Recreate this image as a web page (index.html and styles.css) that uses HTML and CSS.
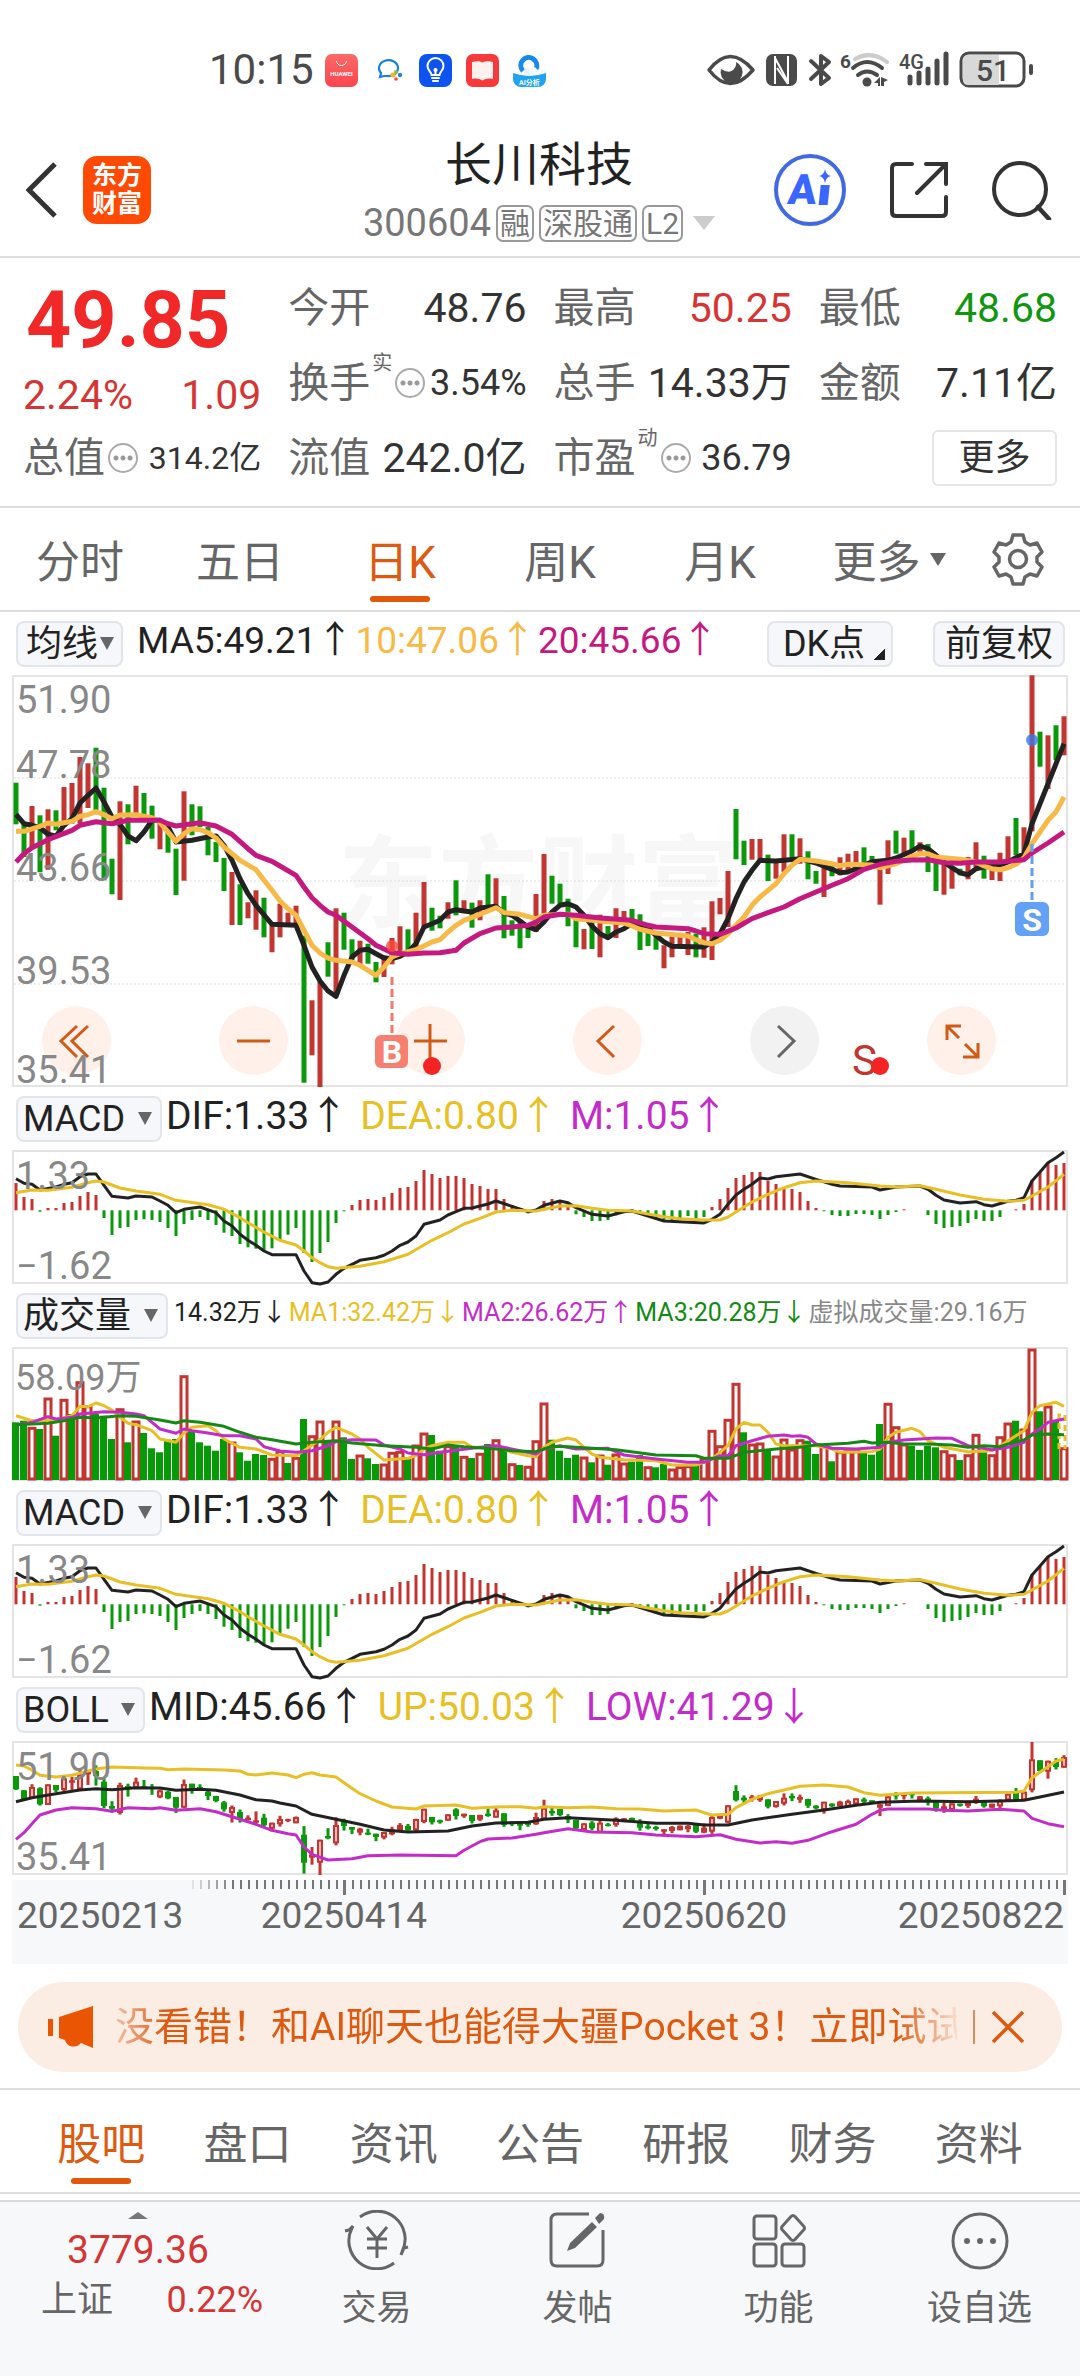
FILE: index.html
```html
<!DOCTYPE html>
<html lang="zh-CN">
<head>
<meta charset="utf-8">
<meta name="viewport" content="width=device-width, initial-scale=1">
<title>长川科技 300604</title>
<link rel="stylesheet" href="styles.css">
</head>
<body>
<div class="status">
  <div class="status-left">
    <span class="clock">10:15</span>
    <div class="app-icons">
      <svg viewBox="0 0 33 33"><defs><linearGradient id="hw" x1="0" y1="0" x2="0" y2="1"><stop offset="0" stop-color="#fb6a66"/><stop offset="1" stop-color="#fc4450"/></linearGradient></defs><rect width="33" height="33" rx="7" fill="url(#hw)"/><path d="M11.500 7a5 4.500 0 0 0 10 0" fill="none" stroke="#fff"/><text x="16.500" y="21.500" font-size="6" font-weight="700" fill="#fff" text-anchor="middle">HUAWEI</text></svg>
      <svg viewBox="0 0 33 33"><path d="M8 23l1-4a9.500 8 0 1 1 6 3l-3 0z" fill="none" stroke="#1a7fdc" stroke-width="2.200"/><circle cx="24" cy="18" r="2" fill="#7dc242"/><circle cx="28" cy="21" r="2.200" fill="#2c7fe0"/><circle cx="21" cy="21" r="2.500" fill="#f3b52c"/><circle cx="24" cy="25" r="1.800" fill="#e8562b"/></svg>
      <svg viewBox="0 0 33 33"><rect width="33" height="33" rx="8" fill="#0d53f0"/><path d="M12.500 21c0-3-4-4-4-9a8 8 0 0 1 16 0c0 5-4 6-4 9z M13 24h7M14 27h5M16.500 21v-6" fill="none" stroke="#fff" stroke-width="2" stroke-linecap="round"/><circle cx="16.500" cy="16" r="2" fill="#fff"/></svg>
      <svg viewBox="0 0 33 33"><rect width="33" height="33" rx="7" fill="#f7393b"/><path d="M6 8c4-1 8-1 10.500.5C19 7 23 7 27 8v17c-4-1-8 0-10.500 1.500C14 25 10 24 6 25z" fill="#fff1ed"/></svg>
      <svg viewBox="0 0 33 33"><path d="M0 19q16 6 33 0v6a8 8 0 0 1-8 8H8a8 8 0 0 1-8-8z" fill="#1fa3f2"/><path d="M10 17a8 8 0 1 1 13-2" fill="none" stroke="#1688ee" stroke-width="5"/><circle cx="15" cy="18" r="4" fill="#e6f3ff"/><circle cx="20" cy="17" r="4" fill="#f4faff"/><text x="16.500" y="31" font-size="7" font-weight="700" fill="#fff" text-anchor="middle">AI分析</text></svg>
    </div>
  </div>
  <svg class="status-right" viewBox="0 0 330 40" aria-label="状态">
    <g fill="none" stroke="#4a4a4a" stroke-linecap="round" stroke-linejoin="round">
      <path d="M3 20Q24-7 47 20Q24 47 3 20z" stroke-width="3.500"/>
      <path d="M105 11l18 17-8 6V6l8 6-18 17" stroke-width="4"/>
      <path d="M149 9q16-9 32 3" stroke="#ccc" stroke-width="4"/>
      <path d="M147 18q14-12 29 0" stroke-width="4"/><path d="M152 25q9-7 19 0" stroke-width="4"/>
      <path d="M204 27v6M213 23v10M222 19v14M231 11v22M240 4v29" stroke-width="5"/>
    </g>
    <rect x="60" y="4" width="31" height="32" rx="7" fill="#4a4a4a"/>
    <path d="M69 6v28M82 34V6M69 8l13 24M71 18l11 16" stroke="#fff" stroke-width="2" fill="none"/>
    <path d="M30 12a11 11 0 1 1-15 7q8 5 12 1 4-4 3-8z" fill="#4a4a4a"/>
    <circle cx="161" cy="32" r="4.500" fill="#4a4a4a"/><path d="M168 33l6-6v9h-2v-3zM175 27l7 3-4 2v4h-3z" fill="#4a4a4a"/>
    <rect x="255" y="3" width="63" height="33" rx="8" fill="#fff" stroke="#4a4a4a" stroke-width="3"/>
    <path d="M262 5h31v30h-31q-5 0-5-5V10q0-5 5-5z" fill="#d8d8d8"/>
    <rect x="323" y="14" width="4" height="11" rx="2" fill="#4a4a4a"/>
    <g fill="#4a4a4a"><text x="134" y="18" font-size="19" font-weight="700">6</text><text x="193" y="19" font-size="20" font-weight="500">4G</text><text x="287" y="31" font-size="30" font-weight="500" text-anchor="middle">51</text></g>
  </svg>
</div>

<header class="head">
  <div class="head-left">
    <button class="plain" aria-label="返回"><svg width="32" height="60" viewBox="0 0 32 60"><path d="M29 4L3 30l26 26" fill="none" stroke="#333" stroke-width="5"/></svg></button>
    <a class="logo" href="#">东方<br>财富</a>
  </div>
  <div class="head-mid">
    <h1>长川科技</h1>
    <div class="code"><span>300604</span><b>融</b><b>深股通</b><b>L2</b><i class="caret"></i></div>
  </div>
  <div class="head-right">
    <button class="plain" aria-label="AI"><svg width="72" height="72" viewBox="0 0 72 72"><circle cx="36" cy="36" r="34" fill="none" stroke="#4169e1" stroke-width="4"/><g transform="skewX(-6)" fill="#3a66ff"><text x="18" y="50" font-size="42" font-weight="900">A</text><path d="M50 31h9v20h-9z"/></g><path d="M51 15q1 6 6 7-5 1-6 7-1-6-6-7 5-1 6-7z" fill="#3a66ff"/></svg></button>
    <button class="plain" aria-label="分享"><svg width="58" height="58" viewBox="0 0 58 58"><path d="M22 3H6Q2 3 2 7v44q0 4 4 4h46q4 0 4-4V36M36 3h20v20M56 3L27 32" fill="none" stroke="#333" stroke-width="4" stroke-linecap="round"/></svg></button>
    <button class="plain" aria-label="搜索"><svg width="60" height="60" viewBox="0 0 60 60"><circle cx="28" cy="29" r="26" fill="none" stroke="#333" stroke-width="4"/><path d="M46 47l11 12" stroke="#333" stroke-width="4.500" stroke-linecap="round"/></svg></button>
  </div>
</header>

<section class="quote">
  <div class="col">
    <strong class="price">49.85</strong>
    <div class="cell change"><span>2.24%</span><span>1.09</span></div>
    <div class="cell"><span class="k">总值</span><i class="dots"></i><span class="v xs">314.2亿</span></div>
  </div>
  <div class="col">
    <div class="cell"><span class="k">今开</span><span class="v">48.76</span></div>
    <div class="cell"><span class="k">换手</span><sup>实</sup><i class="dots"></i><span class="v sm">3.54%</span></div>
    <div class="cell"><span class="k">流值</span><span class="v">242.0亿</span></div>
  </div>
  <div class="col">
    <div class="cell"><span class="k">最高</span><span class="v up">50.25</span></div>
    <div class="cell"><span class="k">总手</span><span class="v">14.33万</span></div>
    <div class="cell"><span class="k">市盈</span><sup>动</sup><i class="dots"></i><span class="v sm">36.79</span></div>
  </div>
  <div class="col">
    <div class="cell"><span class="k">最低</span><span class="v down">48.68</span></div>
    <div class="cell"><span class="k">金额</span><span class="v">7.11亿</span></div>
    <div class="cell"><button class="more">更多</button></div>
  </div>
</section>

<nav class="tabs periods">
  <button>分时</button><button>五日</button><button class="on">日K</button><button>周K</button><button>月K</button>
  <button>更多<i class="tri"></i></button>
  <button aria-label="设置"><svg width="54" height="54" viewBox="0 0 54 54"><path d="M22 3h10l2 7 5 3 7-2 5 9-5 5v5l5 5-5 9-7-2-5 3-2 7H22l-2-7-5-3-7 2-5-9 5-5v-5l-5-5 5-9 7 2 5-3z" fill="none" stroke="#666" stroke-width="3.500" stroke-linejoin="round"/><circle cx="27" cy="27" r="8.500" fill="none" stroke="#666" stroke-width="3.500"/></svg></button>
</nav>

<main>
  <div class="bar ma">
    <select class="pill tight" aria-label="均线"><option>均线</option></select>
    <span>MA5:49.21↑</span><span class="c-or">10:47.06↑</span><span class="c-mg">20:45.66↑</span>
    <div class="right"><button class="pill corner">DK点</button><button class="pill">前复权</button></div>
  </div>
  <div class="chart" id="kline">
    <div class="tools">
      <button aria-label="最左"><svg viewBox="0 0 69 69"><path d="M35 20L19 35l16 16M46 20L30 35l16 16"/></svg></button>
      <button aria-label="缩小"><svg viewBox="0 0 69 69"><path d="M18 35h33"/></svg></button>
      <button aria-label="放大"><svg viewBox="0 0 69 69"><path d="M18 35h33M34 18v34"/></svg></button>
      <button aria-label="左移"><svg viewBox="0 0 69 69"><path d="M41 20L25 35l16 16"/></svg></button>
      <button class="off" aria-label="右移"><svg viewBox="0 0 69 69"><path d="M28 20l16 15-16 16"/></svg></button>
      <button aria-label="全屏"><svg viewBox="0 0 69 69"><path d="M20 34V20h14M20 20l12 12M51 37v14H36M51 51L38 38"/></svg></button>
    </div>
  </div>
  <div class="bar">
    <select class="pill" aria-label="指标一"><option>MACD</option></select>
    <span>DIF:1.33↑</span><span class="c-ye">DEA:0.80↑</span><span class="c-pu">M:1.05↑</span>
  </div>
  <div class="chart" id="macd1"></div>
  <div class="bar vol">
    <select class="pill" aria-label="指标二"><option>成交量</option></select>
    <span>14.32万↓</span><span class="c-ye">MA1:32.42万↓</span><span class="c-pu">MA2:26.62万↑</span><span class="c-gr">MA3:20.28万↓</span><span class="c-gy">虚拟成交量:29.16万</span>
  </div>
  <div class="chart" id="volume"></div>
  <div class="bar">
    <select class="pill" aria-label="指标三"><option>MACD</option></select>
    <span>DIF:1.33↑</span><span class="c-ye">DEA:0.80↑</span><span class="c-pu">M:1.05↑</span>
  </div>
  <div class="chart" id="macd2"></div>
  <div class="bar">
    <select class="pill" aria-label="指标四"><option>BOLL</option></select>
    <span>MID:45.66↑</span><span class="c-ye">UP:50.03↑</span><span class="c-pu">LOW:41.29↓</span>
  </div>
  <div class="chart" id="boll"></div>
  <div class="axis" id="axis"></div>
</main>

<div class="notice">
  <svg width="48" height="42" viewBox="0 0 48 42"><path d="M12 11L46 0v42l-12-5q-4 5-11 3-4-2-5-6l-6-2zM1 13h5v17H1z" fill="#ea5504"/></svg>
  <a class="notice-text" href="#">没看错！和AI聊天也能得大疆Pocket 3！立即试试</a>
  <button class="plain close" aria-label="关闭"><svg width="34" height="34" viewBox="0 0 34 34"><path d="M2 2l30 30M32 2L2 32" stroke="#dd5a10" stroke-width="3.500"/></svg></button>
</div>

<nav class="tabs news">
  <button class="on">股吧</button><button>盘口</button><button>资讯</button><button>公告</button><button>研报</button><button>财务</button><button>资料</button>
</nav>

<footer class="dock">
  <a class="index" href="#"><i class="open"></i><span class="pt">3779.36</span><span class="row"><span>上证</span><span class="up">0.22%</span></span></a>
  <a href="#"><svg width="68" height="60" viewBox="0 0 68 60"><g fill="none" stroke="#666" stroke-width="3"><path d="M17 7A28 28 0 0 1 59 42l-1 3 3-7 4-1M51 53A28 28 0 0 1 9 18l1-2-4 4-4 1"/><path d="M24 17l10 12 10-12M24 29h20M24 38h20M34 29v19"/></g></svg><span>交易</span></a>
  <a href="#"><svg width="60" height="60" viewBox="0 0 60 60"><path d="M41 4H9Q3 4 3 10v40q0 6 6 6h40q6 0 6-6V20" fill="none" stroke="#666" stroke-width="3"/><path d="M47 8l5-5q5 0 4 6l-5 5zM44 12l5 5-22 21-8 3 3-8z" fill="#666"/></svg><span>发帖</span></a>
  <a href="#"><svg width="60" height="60" viewBox="0 0 60 60"><g fill="none" stroke="#666" stroke-width="3"><rect x="5" y="6" width="22" height="23" rx="3"/><rect x="5" y="34" width="22" height="22" rx="3"/><rect x="33" y="34" width="22" height="22" rx="3"/><path d="M42 6.500q2-2 4 0l9 10q1 2 0 3l-9 10q-2 2-4 0l-9-10q-1-1 0-3z"/></g></svg><span>功能</span></a>
  <a href="#"><svg width="60" height="60" viewBox="0 0 60 60"><circle cx="30" cy="31" r="27" fill="none" stroke="#666" stroke-width="3"/><g fill="#666"><circle cx="17" cy="31" r="3"/><circle cx="30" cy="31" r="3"/><circle cx="43" cy="31" r="3"/></g></svg><span>设自选</span></a>
</footer>
<script src="chart.js"></script>
</body>
</html>
```
FILE: styles.css
```css
* { box-sizing: border-box; }
body {
  margin: 0;
  background: #fff;
  color: #222;
  font-family: Roboto, "Noto Sans CJK SC", sans-serif;
  font-size: 36px;
}
button, select { font: inherit; color: inherit; margin: 0; }
a { color: inherit; text-decoration: none; }
svg { display: block; }
i { font-style: normal; }
.plain { padding: 0; border: 0; background: none; }

.status {
  display: flex;
  justify-content: space-between;
  align-items: center;
  height: 90px;
  padding: 50px 44px 0 209px;
}
.status-left { display: flex; align-items: center; gap: 11px; }
.clock { font-size: 42px; line-height: 40px; color: #4a4a4a; }
.app-icons { display: flex; gap: 14px; }
.app-icons svg { width: 33px; height: 33px; }
.status-right { width: 330px; height: 40px; }

.head {
  display: grid;
  grid-template-columns: 1fr auto 1fr;
  align-items: center;
  height: 168px;
  padding: 34px 28px 0 26px;
  border-bottom: 2px solid #ddd;
}
.head-left { display: flex; align-items: center; gap: 25px; }
.logo {
  width: 68px;
  height: 68px;
  padding-top: 6px;
  border-radius: 14px;
  background: #ff4a05;
  color: #fff;
  font-size: 25px;
  font-weight: 700;
  line-height: 28px;
  text-align: center;
}
.head-mid { padding-top: 8px; text-align: center; }
h1 { margin: 0; font-size: 47px; font-weight: 400; line-height: 58px; }
.code {
  display: flex;
  align-items: center;
  gap: 5px;
  height: 58px;
  font-size: 38px;
  color: #777;
}
.code b {
  padding: 0 2px;
  border: 2px solid #999;
  border-radius: 7px;
  font-size: 30px;
  font-weight: 400;
  line-height: 33px;
}
.caret {
  margin-left: 5px;
  border: 11px solid transparent;
  border-top: 14px solid #ccc;
  border-bottom: 0;
}
.head-right { display: flex; justify-content: flex-end; align-items: center; gap: 44px; }

.quote {
  display: grid;
  grid-template-columns: repeat(4, minmax(0, 1fr));
  column-gap: 27px;
  padding: 12px 23px 11px;
  border-bottom: 2px solid #ddd;
  white-space: nowrap;
}
.price {
  display: block;
  height: 100px;
  padding-left: 3px;
  font-size: 79px;
  line-height: 100px;
  color: #f02828;
}
.cell { display: flex; align-items: center; height: 75px; font-size: 41px; line-height: 60px; color: #333; }
.cell .k { color: #666; }
.cell sup { align-self: flex-start; margin: 4px 0 0 2px; font-size: 20px; line-height: 28px; color: #666; }
.cell .v { margin-left: auto; }
.cell .sm { font-size: 36px; }
.cell .xs { font-size: 32px; }
.change { height: 50px; justify-content: space-between; }
.change, .cell .up, .up, .pt { color: #d63535; }
.cell .down { color: #129612; }
.dots {
  width: 30px;
  height: 30px;
  margin-left: 3px;
  border: 2px solid #aaa;
  border-radius: 50%;
  background:
    radial-gradient(circle at 6px 13px, #999 2px, transparent 3px),
    radial-gradient(circle at 13px 13px, #999 2px, transparent 3px),
    radial-gradient(circle at 20px 13px, #999 2px, transparent 3px);
}
.more {
  width: 125px;
  height: 56px;
  margin-left: auto;
  padding: 0;
  border: 2px solid #e6e6e6;
  border-radius: 6px;
  background: #fff;
  font-size: 36px;
  line-height: 50px;
}

.tabs { display: grid; height: 104px; border-bottom: 2px solid #ddd; }
.tabs button {
  display: flex;
  position: relative;
  align-items: center;
  justify-content: center;
  padding: 0;
  border: 0;
  background: none;
  font-size: 44px;
  color: #666;
}
.tabs .on { color: #dd5a10; }
.tabs .on::after {
  content: "";
  position: absolute;
  bottom: 8px;
  left: calc(50% - 30px);
  width: 60px;
  height: 6px;
  border-radius: 3px;
  background: #e2570c;
}
.periods { grid-template-columns: repeat(5, 160fr) 178fr 80fr; padding-right: 22px; }
.tri {
  margin-left: 9px;
  border: 8px solid transparent;
  border-top: 13px solid #666;
  border-bottom: 0;
}
.news { grid-template-columns: repeat(7, 1fr); height: 106px; padding: 0 28px; border-top: 2px solid #ddd; }

main { padding: 0 12px; }
.bar {
  display: flex;
  align-items: center;
  gap: 12px;
  height: 63px;
  padding: 0 4px;
  font-size: 39px;
  line-height: 46px;
  white-space: nowrap;
}
.bar > span { padding-bottom: 6px; }
.pill {
  height: 46px;
  padding: 0 10px;
  border: 2px solid #e2e5e9;
  border-radius: 8px;
  background: #f6f7fa;
  font-size: 36px;
  line-height: 40px;
}
select.pill {
  appearance: none;
  margin-right: -8px;
  padding: 0 34px 0 5px;
  background: #f6f7fa url("data:image/svg+xml,%3Csvg xmlns='http://www.w3.org/2000/svg' width='14' height='13'%3E%3Cpath d='M0 0h14L7 13z' fill='%23666'/%3E%3C/svg%3E") no-repeat right 8px center;
}
select.tight { margin-right: 12px; padding: 0 22px 0 8px; background-position: right 7px center; }
.ma { gap: 2px; padding-right: 3px; font-size: 37px; }
.right { display: flex; gap: 40px; margin-left: auto; }
.corner {
  width: 126px;
  padding: 0 22px 0 10px;
  background: linear-gradient(135deg, transparent 50%, #222 50%) no-repeat right 6px bottom 5px / 12px 12px #f6f7fa;
}
.vol { gap: 2px; font-size: 25px; }
.vol select.pill { margin-right: 4px; }
.c-or { color: #f7b948; }
.c-mg { color: #c6197f; }
.c-ye { color: #e8bf25; }
.c-pu { color: #c42cc9; }
.c-gr { color: #148a14; }
.c-gy { color: #888; }

.chart { position: relative; border: 2px solid #e4e4e4; }
.chart > svg { position: relative; z-index: 1; width: 100%; height: auto; overflow: visible; pointer-events: none; }
.chart text { font-size: 38px; fill: #888; }
.chart .water { font-size: 100px; font-weight: 700; fill: #f7f7f7; }
.chart .mark { font-size: 32px; font-weight: 700; fill: #fff; text-anchor: middle; }
.chart .sig { font-size: 42px; fill: #c23531; }
.tools {
  position: absolute;
  left: 28px;
  right: 70px;
  bottom: 10px;
  display: flex;
  justify-content: space-between;
}
.tools button {
  width: 69px;
  height: 69px;
  padding: 0;
  border: 0;
  border-radius: 50%;
  background: #fff1ea;
}
.tools path { fill: none; stroke: #d05a18; stroke-width: 3; }
.tools .off { background: #f2f2f2; }
.tools .off path { stroke: #666; }

.axis { margin-top: 5px; background: #f7f8fa; }
.axis svg { width: 100%; height: auto; }
.axis text { font-size: 37px; fill: #666; }

.notice {
  display: flex;
  align-items: center;
  height: 90px;
  margin: 18px 18px 16px;
  padding: 0 37px 0 29px;
  border-radius: 45px;
  background: #fcede4;
  color: #dd5a10;
}
.notice-text {
  flex: 1;
  min-width: 0;
  margin: 0 16px 0 20px;
  overflow: hidden;
  font-size: 39px;
  line-height: 60px;
  white-space: nowrap;
  -webkit-mask-image: linear-gradient(90deg, rgba(0, 0, 0, .3), #000 50px, #000 calc(100% - 60px), rgba(0, 0, 0, .1));
  mask-image: linear-gradient(90deg, rgba(0, 0, 0, .3), #000 50px, #000 calc(100% - 60px), rgba(0, 0, 0, .1));
}
.close { padding-left: 16px; border-left: 2px solid #dd8a5c; }

.dock {
  display: grid;
  grid-template-columns: 276fr repeat(4, 201fr);
  min-height: 176px;
  margin-top: 6px;
  border-top: 2px solid #d8d9dc;
  background: #f7f8fa;
  font-size: 35px;
  color: #666;
}
.dock a { display: flex; flex-direction: column; align-items: center; padding-top: 8px; }
.dock a > span { margin-top: 14px; line-height: 50px; }
.dock .index > span { margin-top: 0; }
.open { margin: 2px 0 6px; border: 10px solid transparent; border-top: 0; border-bottom: 7px solid #777; }
.dock .pt { font-size: 39px; }
.dock .row { display: flex; justify-content: space-between; align-self: stretch; padding: 0 13px 0 41px; font-size: 36px; }
```
FILE: chart.js
```js
// Vertical values are in thirds of a pixel, measured from a fixed origin in each panel.
const RED = '#c23531', GREEN = '#0a990a', COUNT = 132;
const W = 1052, X = i => 2 + 8 * i;

const rising = new Set([2,4,6,7,8,9,13,15,18,21,27,29,30,32,33,34,35,37,38,40,43,46,47,48,50,51,54,56,58,60,65,66,71,73,75,76,81,82,83,84,86,87,88,89,92,93,95,96,98,101,103,104,105,108,109,111,113,116,117,119,120,122,123,124,126,127,129,131]);
const range = '367-492 490-590 437-560 465-636 447-628 450-510 380-500 368-490 290-490 309-443 262-450 382-660 595-702 423-719 432-552 376-462 398-470 436-535 485-567 500-577 565-704 393-661 432-525 438-500 500-585 545-605 593-692 635-794 672-794 726-774 690-808 712-831 795-876 730-831 757-790 736-795 826-1267 1020-1185 965-1280 846-949 744-1005 757-868 837-900 841-912 850-910 905-966 885-950 833-912 798-880 807-870 757-870 665-800 742-811 766-804 726-775 660-765 720-750 727-802 720-780 642-740 654-745 707-834 780-826 785-864 795-833 701-815 581-760 646-730 670-735 715-798 765-861 806-867 780-866 763-891 797-830 744-833 752-790 746-785 762-869 805-857 823-868 855-924 825-891 820-855 815-884 820-891 801-892 723-899 713-762 632-800 446-597 541-614 536-598 536-600 583-662 600-655 522-635 522-595 534-610 573-657 632-670 610-710 615-648 591-645 580-630 572-625 561-615 587-605 615-733 540-641 511-580 532-580 510-570 546-580 551-635 590-692 610-703 625-685 625-645 590-657 546-620 586-655 620-659 577-662 528-600 473-585 501-580 45-513 214-319 225-386 195-300 168-285';
const body = '285-325 328-355 318-352 322-370 310-372 312-328 292-327 298-305 280-325 270-280 270-285 302-375 375-383 312-396 315-322 302-322 316-324 318-324 328-349 332-352 348-380 309-380 308-325 318-325 332-345 345-360 364-385 378-396 393-415 410-418 418-425 410-433 425-443 414-430 415-420 408-427 461-545 520-530 476-545 465-472 432-487 418-435 438-446 443-455 455-461 458-468 453-470 445-460 432-447 435-448 414-448 383-423 408-424 418-424 400-419 385-405 398-406 402-420 402-416 398-405 388-410 397-432 424-430 428-434 426-432 408-430 380-415 390-397 384-402 405-415 417-442 427-447 425-442 425-455 430-435 412-432 412-418 411-417 420-440 436-442 438-444 445-452 438-450 434-448 434-445 432-452 440-455 408-452 402-413 373-425 330-358 350-358 347-353 344-358 355-377 360-378 350-368 345-352 348-356 354-374 374-382 362-387 368-376 362-376 360-378 352-370 355-362 358-364 370-380 346-375 338-346 338-346 337-343 346-358 352-360 362-382 376-388 367-387 368-374 362-375 353-362 362-376 368-380 358-376 338-358 336-354 332-358 235-328 238-270 239-272 240-258 228-260';
const pairs = s => s.split(' ').map(p => p.split('-').map(Number));

const volTop = '1010 1005 1025 1030 937 1050 941 985 888 960 985 990 1060 969 1070 1006 1042 1088 1100 1062 1060 870 1035 1070 1080 1095 1060 1069 1100 1125 1105 1108 1118 1095 1132 1115 1000 1050 1006 1065 1006 1055 1120 1108 1118 1135 1135 1100 1097 1120 1078 1042 1048 1095 1080 1082 1112 1117 1103 1075 1062 1095 1134 1138 1142 1065 952 1062 1095 1117 1107 1114 1130 1108 1137 1105 1132 1128 1108 1143 1145 1135 1150 1143 1140 1135 1120 1034 1080 1001 893 1040 1075 1072 1090 1111 1060 1090 1062 1065 1105 1080 1127 1098 1095 1095 1100 1107 1015 953 1023 1075 1080 1093 1080 1085 1095 1107 1123 1107 1046 1100 1107 1053 1012 1005 1030 788 977 961 1003 1086'.split(' ').map(Number);
const volRed = new Set([2,4,6,8,9,13,15,21,27,32,33,35,37,38,40,43,46,47,48,50,51,54,56,58,60,62,64,65,66,71,73,75,76,79,82,83,84,86,87,88,89,90,92,93,95,96,97,98,101,103,104,105,109,110,111,116,117,119,120,122,123,124,126,127,129,131]);
const macdEnd = '291 333 339 377 366 366 351 348 330 318 327 396 447 426 423 402 400 402 408 426 450 414 402 393 402 417 440 450 474 484 488 492 487 462 446 426 501 528 501 468 411 375 357 342 339 342 333 321 306 303 285 252 264 276 270 270 276 294 300 309 309 339 357 373 382 373 345 339 342 355 385 393 405 405 402 388 377 369 382 390 400 405 404 398 390 396 393 363 339 306 276 267 258 258 285 294 303 309 318 345 366 376 387 390 390 384 384 387 399 387 378 370 373 373 387 414 426 423 420 411 399 405 405 393 373 370 354 282 258 231 237 231'.split(' ').map(Number);

const y = (v, top) => Math.round((v - top) / 3 * 10) / 10;
const line = (s, top, color, w) => `<polyline fill="none" stroke="${color}" stroke-width="${w}" stroke-linejoin="round" points="${s.split(';').map(p => { const [i, v] = p.split(',').map(Number); return X(i) + ',' + y(v, top); }).join(' ')}"/>`;
const bar = (i, a, b, top, w, c) => `<rect x="${X(i) - w / 2}" y="${y(a, top)}" width="${w}" height="${Math.max(y(b, top) - y(a, top), 1)}" fill="${c}"/>`;
const label = (t, yy) => `<text x="2" y="${yy}">${t}</text>`;
const draw = (id, h, inner) => document.getElementById(id).insertAdjacentHTML('afterbegin', `<svg viewBox="0 0 ${W} ${h}">${inner}</svg>`);
const tone = i => rising.has(i) ? RED : GREEN;

// Daily candles with moving averages
let k = '<text class="water" x="324" y="242">东方财富</text>';
[353, 662, 971].forEach(v => { k += `<path d="M0 ${y(v, 50)}H${W}" stroke="#ddd" stroke-width="1" stroke-dasharray="2 2"/>`; });
pairs(range).forEach(([a, b], i) => { k += bar(i, a, b, 50, 5, tone(i)); });
k += line('0,462;1,490;2,495;3,502;4,522;5,528;6,495;7,475;8,428;9,405;10,383;11,425;12,470;13,492;14,527;15,541;16,515;17,480;18,480;19,500;20,545;22,540;24,530;25,527;26,555;27,600;28,655;29,700;30,735;32,792;35,795;36,855;37,920;38,962;39,992;40,1008;41,945;42,890;43,870;44,867;45,880;46,893;47,895;48,888;49,875;50,850;51,800;52,790;53,780;54,755;55,748;56,752;57,755;58,743;60,738;61,758;62,765;63,782;64,800;65,808;66,785;67,755;68,735;69,730;70,740;71,765;72,797;73,820;74,832;75,815;76,805;77,790;78,795;79,803;80,825;81,845;82,858;86,860;87,845;88,820;89,775;90,715;91,665;92,630;93,600;95,602;98,595;100,608;101,618;102,627;103,637;104,635;105,625;107,604;109,600;110,593;112,572;113,557;114,565;115,585;116,605;117,622;118,637;119,643;120,625;121,620;122,616;123,615;124,605;125,592;126,580;127,490;128,430;129,370;130,310;131,250', 50, '#222', 5);
k += line('0,513;1,513;3,498;4,488;5,492;7,483;8,468;9,463;10,454;11,463;12,475;13,464;15,463;17,472;18,487;19,515;20,543;21,520;22,505;23,508;24,517;25,533;26,560;27,580;28,600;30,628;31,660;32,690;33,722;34,745;35,765;36,810;37,855;38,878;39,893;40,900;42,905;43,915;44,930;45,945;46,920;47,890;48,880;50,868;52,845;53,838;54,815;55,795;56,780;58,762;60,742;61,757;63,762;65,775;66,765;69,762;70,775;73,782;76,788;77,797;78,807;80,818;84,827;85,838;86,847;87,850;88,840;89,820;90,795;91,770;92,735;93,710;94,690;95,670;96,640;97,615;98,597;100,602;102,610;103,616;104,612;107,614;108,622;110,610;111,600;112,588;113,580;114,580;115,590;116,592;118,597;120,605;121,617;122,625;123,628;124,622;125,612;126,592;127,550;128,515;129,480;130,455;131,410', 50, '#f7b948', 5);
k += line('0,605;1,580;2,562;4,538;7,510;8,495;10,484;12,490;14,480;16,480;18,480;19,490;20,497;22,490;23,487;25,497;27,522;29,565;30,585;32,603;33,617;35,645;36,680;37,712;38,735;39,755;40,765;42,800;44,835;45,855;47,877;49,882;51,878;53,877;55,870;56,848;58,820;60,803;62,800;64,795;65,785;66,770;68,762;70,765;73,773;77,780;79,795;80,800;84,805;85,812;86,820;88,822;90,803;92,775;94,757;96,740;98,715;100,695;102,675;104,655;106,627;108,612;110,603;112,599;114,598;116,607;118,609;120,605;123,605;126,598;127,578;129,548;131,515', 50, '#c6197f', 5);
k += label('51.90', 36) + label('47.78', 101) + label('43.66', 204) + label('39.53', 307) + label('35.41', 406);
k += `<g><circle cx="378" cy="269" r="6" fill="#fb4a3d" opacity=".8"/><path d="M378 300v58" stroke="#f2776c" stroke-width="3" stroke-dasharray="8 4"/><rect x="361" y="358" width="33" height="33" rx="6" fill="#f77f70"/><text class="mark" x="378" y="386">B</text></g>`;
k += `<g><circle cx="1018" cy="63" r="6" fill="#3a78e8" opacity=".8"/><path d="M1018 167v58" stroke="#649fe8" stroke-width="3" stroke-dasharray="8 4"/><rect x="1001" y="225" width="34" height="34" rx="6" fill="#63a1f7"/><text class="mark" x="1018" y="254">S</text></g>`;
k += `<text class="sig" x="838" y="398">S</text><circle cx="866" cy="389" r="9" fill="#f42424"/><circle cx="418" cy="389" r="9" fill="#f42424"/>`;
draw('kline', 408, k);

// MACD, shown in two panels
let m = '';
macdEnd.forEach((v, i) => { if (v !== 373) m += v < 373 ? bar(i, v, 373, 198, 3, RED) : bar(i, 373, v, 198, 3, GREEN); });
m += line('0,278;1,292;2,295;3,312;5,303;6,295;7,290;8,272;9,264;10,264;11,298;12,331;14,336;15,330;17,333;18,345;19,358;20,380;21,370;23,363;25,380;26,405;27,420;28,445;29,463;30,478;31,495;32,506;35,506;36,555;37,590;38,594;39,588;40,565;41,547;42,535;43,523;45,515;46,508;47,495;48,478;49,468;50,450;51,415;53,402;54,387;55,377;56,367;57,366;59,354;60,345;62,361;64,377;65,372;66,358;68,345;69,350;70,365;72,385;74,390;76,377;77,375;79,390;81,405;86,411;87,400;88,385;89,355;90,327;91,310;92,295;93,276;94,279;95,272;98,264;100,280;102,295;103,300;107,303;108,312;110,303;113,300;114,310;115,328;116,342;118,351;120,347;121,356;122,360;124,346;125,343;126,335;127,285;128,258;129,230;130,215;131,198', 198, '#222', 3);
m += line('0,320;2,312;4,313;7,304;9,290;10,285;11,288;13,306;15,315;18,325;20,343;24,356;26,370;28,395;29,410;31,438;33,463;35,477;36,495;37,515;38,530;39,542;40,547;43,541;46,527;49,505;52,463;54,440;56,414;58,397;60,378;62,373;65,375;68,360;70,359;72,367;74,373;77,375;79,384;81,392;83,398;86,402;88,402;89,393;91,363;92,348;94,325;96,305;98,290;100,285;104,290;108,300;110,303;113,299;115,310;118,327;121,340;124,346;126,343;127,330;129,303;131,265', 198, '#e8bf25', 3);
m += label('1.33', 37) + label('−1.62', 127);
draw('macd1', 130, m);
draw('macd2', 130, m);

// Volume
let v = '';
volTop.forEach((t, i) => {
  const top = Math.max(y(t, 790), 0);
  v += volRed.has(i)
    ? `<rect x="${X(i) - 3}" y="${top + 1}" width="6" height="${129 - top}" fill="#fff" stroke="${RED}" stroke-width="3"/>`
    : `<rect x="${X(i) - 4}" y="${top}" width="7" height="${131 - top}" fill="#069b06"/>`;
});
v += `<path d="M1045 100V66h6v34" fill="none" stroke="#e8bf25" stroke-width="3" stroke-dasharray="6 4"/>`;
v += line('0,990;2,1005;5,1003;7,990;8,962;9,963;10,952;11,960;12,973;13,995;14,1013;15,1017;17,1035;18,1060;20,1070;21,1042;22,1025;24,1020;25,1035;26,1060;28,1085;30,1090;32,1108;35,1110;36,1095;37,1078;38,1062;39,1040;40,1025;42,1045;43,1060;44,1085;46,1123;49,1118;50,1110;51,1090;52,1080;54,1070;56,1070;57,1085;59,1085;60,1083;62,1100;64,1110;65,1113;66,1085;67,1070;69,1057;70,1063;71,1085;72,1105;73,1115;76,1122;80,1125;82,1138;85,1138;87,1120;88,1100;89,1080;90,1030;91,1010;92,1018;93,1018;94,1040;95,1075;96,1080;100,1080;102,1090;103,1100;107,1098;108,1090;109,1055;110,1040;112,1028;113,1038;114,1065;116,1085;119,1098;122,1095;123,1080;125,1050;126,1035;127,980;128,960;130,950;131,962', 790, '#e8bf25', 3);
v += line('0,1018;2,1010;4,993;5,1000;7,995;8,985;11,978;13,980;15,985;16,990;17,1010;18,1030;20,1043;21,1030;22,1035;24,1042;26,1050;28,1050;30,1060;31,1083;33,1096;35,1100;37,1095;39,1080;40,1068;42,1062;45,1063;46,1078;48,1090;49,1102;51,1107;54,1097;57,1088;60,1080;63,1095;65,1105;66,1090;68,1080;70,1090;74,1088;76,1108;80,1120;84,1130;86,1130;88,1110;89,1110;90,1080;92,1065;94,1052;96,1048;97,1052;98,1050;99,1055;100,1075;102,1088;105,1090;108,1085;109,1070;111,1063;115,1057;117,1058;119,1080;122,1092;124,1085;126,1070;127,1045;128,1030;129,1010;131,1000', 790, '#c42cc9', 3);
v += line('0,1017;4,1013;6,1005;8,995;10,997;13,990;15,992;18,1003;20,1012;21,1005;23,1010;26,1022;28,1040;30,1055;32,1062;35,1075;37,1070;40,1065;42,1072;46,1080;50,1085;52,1090;54,1078;56,1083;60,1090;62,1095;65,1098;67,1082;69,1083;72,1088;75,1092;80,1108;85,1110;86,1118;89,1118;91,1100;95,1090;98,1085;100,1078;104,1073;106,1067;107,1072;109,1070;111,1075;114,1075;117,1078;119,1085;121,1080;123,1083;124,1075;126,1063;127,1048;129,1045;131,1047', 790, '#148a14', 3);
v += '<text x="1" y="41" style="font-size:36px">58.09万</text>';
draw('volume', 130, v);

// Bollinger bands
let b = '';
const wicks = pairs(range), fit = n => 183 + (n - 45) * .323;
pairs(body).forEach(([o, c], i) => {
  b += bar(i, Math.min(fit(wicks[i][0]), o), Math.max(fit(wicks[i][1]), c), 186, 3, tone(i));
  b += bar(i, o, c, 186, 6, tone(i));
  if (rising.has(i) && c - o > 15) b += bar(i, o + 6, c - 6, 186, 2, '#fbb');
});
b += line('0,252;1,255;2,268;3,283;5,288;7,283;9,270;10,264;12,258;16,261;18,262;19,266;21,264;26,267;28,270;29,280;30,282;32,276;34,282;35,290;36,280;37,275;38,282;40,288;41,305;43,338;45,360;47,378;50,384;51,375;55,372;57,382;60,378;63,377;65,382;66,377;69,380;72,378;75,383;78,384;81,390;85,387;86,395;87,402;89,400;90,380;92,355;94,338;96,327;98,316;101,312;104,318;106,335;108,343;112,336;125,334;126,330;127,290;129,257;130,240;131,235', 186, '#e8bf25', 3);
b += line('0,362;2,350;5,338;8,327;10,323;12,326;15,320;18,321;20,328;23,325;25,328;28,342;30,356;32,360;33,366;35,375;37,400;40,415;43,430;46,447;49,453;54,450;57,435;60,426;64,424;66,415;69,410;75,418;80,427;84,427;86,432;89,432;92,417;97,400;101,387;105,373;108,364;113,360;119,362;126,358;128,348;131,333', 186, '#222', 3);
b += line('0,475;1,455;2,428;3,402;5,387;7,380;10,383;12,391;14,380;17,383;18,380;20,388;23,383;25,392;28,415;30,430;32,448;34,458;35,462;36,498;37,520;39,537;42,533;44,524;48,522;55,524;56,508;58,482;59,474;62,471;65,460;66,455;69,443;72,453;77,455;80,462;85,467;88,461;90,475;93,486;95,482;97,487;99,478;102,452;105,430;107,400;108,388;109,384;114,384;116,388;119,390;123,385;126,390;127,412;129,428;131,437', 186, '#c42cc9', 3);
b += label('51.90', 37) + label('35.41', 127);
draw('boll', 130, b);

// Date ruler
let a = '';
for (let i = 22; i < COUNT; i++) {
  const long = i === 41 || i === 86 || i === 131;
  a += `<rect x="${4 + 8 * i - (long ? 1 : 0)}" y="0" width="${long ? 3 : 2}" height="${long ? 15 : 9}" fill="#777" opacity="${Math.min(1, (i - 21) / 6)}"/>`;
}
[['20250213', 5, 'start'], ['20250414', 332, 'middle'], ['20250620', 692, 'middle'], ['20250822', 1052, 'end']].forEach(([t, x, p]) => { a += `<text x="${x}" y="48" text-anchor="${p}">${t}</text>`; });
document.getElementById('axis').innerHTML = `<svg viewBox="0 0 1056 84">${a}</svg>`;
```
